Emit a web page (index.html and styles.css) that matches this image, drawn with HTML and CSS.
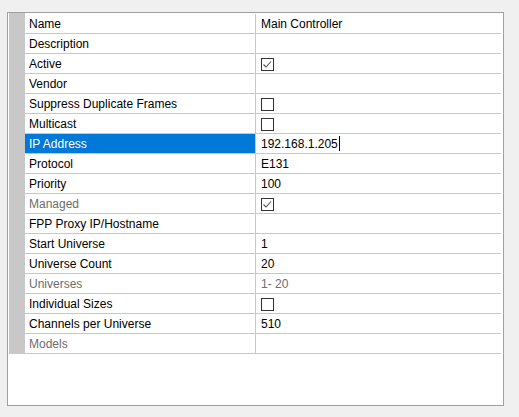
FILE: index.html
```html
<!DOCTYPE html>
<html>
<head>
<meta charset="utf-8">
<link rel="stylesheet" href="styles.css">
</head>
<body>
<div class="panel">
  <div class="grid">
    <div class="strip"></div>
    <div class="rows">
      <div class="row"><div class="label">Name</div><div class="value">Main Controller</div></div>
      <div class="row"><div class="label">Description</div><div class="value"></div></div>
      <div class="row"><div class="label">Active</div><div class="value"><span class="cb"><svg width="13" height="13" viewBox="0 0 13 13"><polyline points="2.5,6.5 5,9 10,3.5" fill="none" stroke="#555" stroke-width="1.1"/></svg></span></div></div>
      <div class="row"><div class="label">Vendor</div><div class="value"></div></div>
      <div class="row"><div class="label">Suppress Duplicate Frames</div><div class="value"><span class="cb"></span></div></div>
      <div class="row"><div class="label">Multicast</div><div class="value"><span class="cb"></span></div></div>
      <div class="row selected"><div class="label">IP Address</div><div class="value">192.168.1.205<span class="caret"></span></div></div>
      <div class="row"><div class="label">Protocol</div><div class="value">E131</div></div>
      <div class="row"><div class="label">Priority</div><div class="value">100</div></div>
      <div class="row"><div class="label disabled">Managed</div><div class="value"><span class="cb"><svg width="13" height="13" viewBox="0 0 13 13"><polyline points="2.5,6.5 5,9 10,3.5" fill="none" stroke="#555" stroke-width="1.1"/></svg></span></div></div>
      <div class="row"><div class="label">FPP Proxy IP/Hostname</div><div class="value"></div></div>
      <div class="row"><div class="label">Start Universe</div><div class="value">1</div></div>
      <div class="row"><div class="label">Universe Count</div><div class="value">20</div></div>
      <div class="row"><div class="label disabled">Universes</div><div class="value disabled">1- 20</div></div>
      <div class="row"><div class="label">Individual Sizes</div><div class="value"><span class="cb"></span></div></div>
      <div class="row"><div class="label">Channels per Universe</div><div class="value">510</div></div>
      <div class="row"><div class="label disabled">Models</div><div class="value"></div></div>
    </div>
  </div>
</div>
</body>
</html>
```
FILE: styles.css
```css
html, body {
  margin: 0;
  padding: 0;
  background: #f0f0f0;
}
body {
  font-family: "Liberation Sans", Arial, sans-serif;
  font-size: 12px;
  color: #000;
}
.panel {
  margin: 12px 0 0 7px;
  width: 494px;
  height: 392px;
  border: 1px solid #a0a0a0;
  background: #fff;
  padding-left: 1px;
  box-sizing: content-box;
}
.grid {
  display: flex;
  align-items: flex-start;
}
.strip {
  width: 16px;
  align-self: stretch;
  background: #c8c8c8;
}
.rows {
  width: 476px;
  padding-top: 1px;
}
.row {
  display: flex;
  height: 19px;
  border-bottom: 1px solid #c8c8c8;
}
.label {
  width: 226px;
  padding-left: 4px;
  padding-top: 1px;
  border-right: 1px solid #c8c8c8;
  line-height: 18px;
  white-space: nowrap;
}
.value {
  flex: 1;
  padding-left: 5px;
  padding-top: 1px;
  line-height: 18px;
  white-space: nowrap;
  display: flex;
  align-items: flex-start;
}
.disabled {
  color: #6d6d6d;
}
.selected .label {
  background: #0078d7;
  color: #fff;
}
.caret {
  display: inline-block;
  width: 1px;
  height: 15px;
  background: #000;
  margin-top: 1px;
  margin-left: 1px;
}
.cb {
  display: inline-block;
  width: 11px;
  height: 11px;
  border: 1px solid #333;
  margin-top: 3px;
  position: relative;
  background: #fff;
}
.cb svg {
  position: absolute;
  left: -1px;
  top: -1px;
}
```
